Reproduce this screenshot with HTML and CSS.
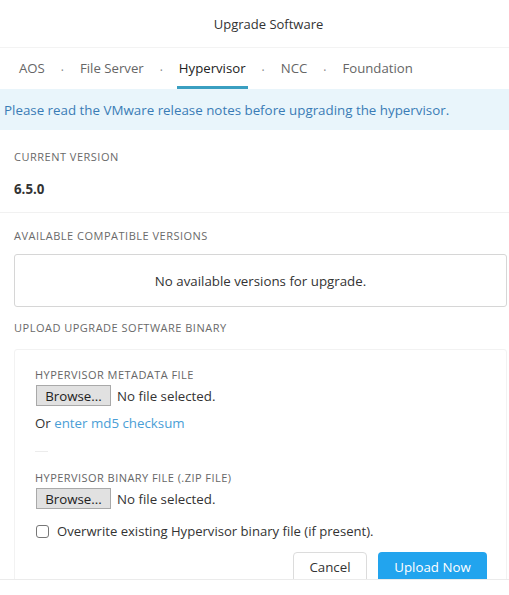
FILE: index.html
```html
<!DOCTYPE html>
<html>
<head>
<meta charset="utf-8">
<link rel="stylesheet" href="styles.css">
</head>
<body>
<div class="modal">
  <div class="header">Upgrade Software</div>
  <div class="tabs">
    <span class="tab">AOS</span><span class="dot">·</span>
    <span class="tab">File Server</span><span class="dot">·</span>
    <span class="tab active">Hypervisor</span><span class="dot">·</span>
    <span class="tab">NCC</span><span class="dot">·</span>
    <span class="tab">Foundation</span>
  </div>
  <div class="body">
    <div class="banner">Please read the VMware release notes before upgrading the hypervisor.</div>
    <div class="current">
      <div class="label">CURRENT VERSION</div>
      <div class="version">6.5.0</div>
    </div>
    <div class="section">
      <div class="label">AVAILABLE COMPATIBLE VERSIONS</div>
      <div class="empty-box">No available versions for upgrade.</div>
      <div class="label upload-label">UPLOAD UPGRADE SOFTWARE BINARY</div>
      <div class="upload-box">
        <div class="field-label">HYPERVISOR METADATA FILE</div>
        <div class="file-row"><span class="browse">Browse...</span><span class="nofile">No file selected.</span></div>
        <div class="or">Or <a class="link">enter md5 checksum</a></div>
        <div class="mini-rule"></div>
        <div class="field-label second">HYPERVISOR BINARY FILE (.ZIP FILE)</div>
        <div class="file-row"><span class="browse">Browse...</span><span class="nofile">No file selected.</span></div>
        <label class="check-row"><span class="checkbox"></span><span>Overwrite existing Hypervisor binary file (if present).</span></label>
        <div class="actions">
          <span class="btn cancel">Cancel</span>
          <span class="btn primary">Upload Now</span>
        </div>
      </div>
    </div>
  </div>
</div>
</body>
</html>
```
FILE: styles.css
```css
html, body {
  margin: 0;
  padding: 0;
  background: #fff;
}
body {
  font-family: "Open Sans", Lato, Arial, sans-serif;
  color: #333;
  width: 509px;
  height: 595px;
  overflow: hidden;
}
.header {
  height: 47px;
  display: flex;
  align-items: center;
  justify-content: center;
  padding-left: 28px;
  font-size: 13px;
  color: #333;
  border-bottom: 1px solid #f3f3f3;
}
.tabs {
  height: 41px;
  display: flex;
  align-items: stretch;
  padding-left: 17px;
  gap: 14px;
  font-size: 13.2px;
  color: #666;
}
.tab {
  display: flex;
  align-items: center;
  padding: 1px 2px 0;
  border-bottom: 3px solid transparent;
}
.tab.active {
  color: #222;
  border-bottom-color: #3a9fc1;
}
.dot {
  display: flex;
  align-items: center;
  color: #888;
  font-size: 12px;
  padding-top: 4px;
}
.body {
  height: 490px;
  overflow: hidden;
  border-bottom: 1px solid #ebebeb;
}
.banner {
  height: 41px;
  background: #e9f5fb;
  color: #3a7cb6;
  font-size: 13.35px;
  display: flex;
  align-items: center;
  padding-left: 4px;
}
.current {
  padding: 20px 14px 14px;
  border-bottom: 1px solid #f1f1f1;
}
.section {
  padding: 0 2px 0 14px;
}
.label {
  font-size: 11px;
  letter-spacing: 0.5px;
  color: #6a6a6a;
  line-height: 13px;
}
.version {
  font-size: 13.3px;
  font-weight: bold;
  color: #333;
  line-height: 18px;
  margin-top: 17px;
}
.section > .label:first-child {
  margin-top: 16px;
}
.empty-box {
  margin-top: 12px;
  height: 53px;
  box-sizing: border-box;
  border: 1px solid #d6d6d6;
  border-radius: 3px;
  display: flex;
  align-items: center;
  justify-content: center;
  font-size: 13.3px;
  color: #333;
}
.upload-label {
  margin-top: 14px;
}
.upload-box {
  margin-top: 15px;
  border: 1px solid #f2f2f2;
  border-radius: 3px;
  padding: 18px 20px 0 20px;
}
.field-label {
  font-size: 11px;
  letter-spacing: 0.45px;
  color: #666;
  line-height: 13px;
}
.field-label.second {
  margin-top: 19px;
}
.file-row {
  margin-top: 4px;
  display: flex;
  align-items: center;
  gap: 6px;
  font-size: 13.3px;
}
.browse {
  display: inline-flex;
  align-items: center;
  justify-content: center;
  width: 75px;
  height: 21px;
  box-sizing: border-box;
  background: #e1e1e1;
  border: 1px solid #a9a9a9;
  color: #222;
  font-size: 13.3px;
  margin-left: 1px;
}
.nofile {
  color: #333;
}
.or {
  margin-top: 8px;
  font-size: 13.3px;
  color: #333;
}
.link {
  color: #4a9ed6;
}
.mini-rule {
  margin-top: 19px;
  width: 13px;
  height: 1px;
  background: #ececec;
}
.check-row {
  margin-top: 13px;
  display: flex;
  align-items: center;
  gap: 8px;
  font-size: 13.1px;
  color: #333;
}
.checkbox {
  width: 11px;
  height: 11px;
  border: 1px solid #777;
  border-radius: 3px;
  margin-left: 1px;
}
.actions {
  margin-top: 12px;
  display: flex;
  justify-content: flex-end;
  gap: 11px;
  margin-right: -1px;
}
.btn {
  display: inline-flex;
  align-items: center;
  justify-content: center;
  height: 32px;
  box-sizing: border-box;
  border-radius: 4px;
  font-size: 13.3px;
  padding-bottom: 3px;
}
.cancel {
  width: 74px;
  border: 1px solid #dcdcdc;
  color: #333;
}
.primary {
  width: 109px;
  background: #22a4ee;
  color: #fff;
}
```
